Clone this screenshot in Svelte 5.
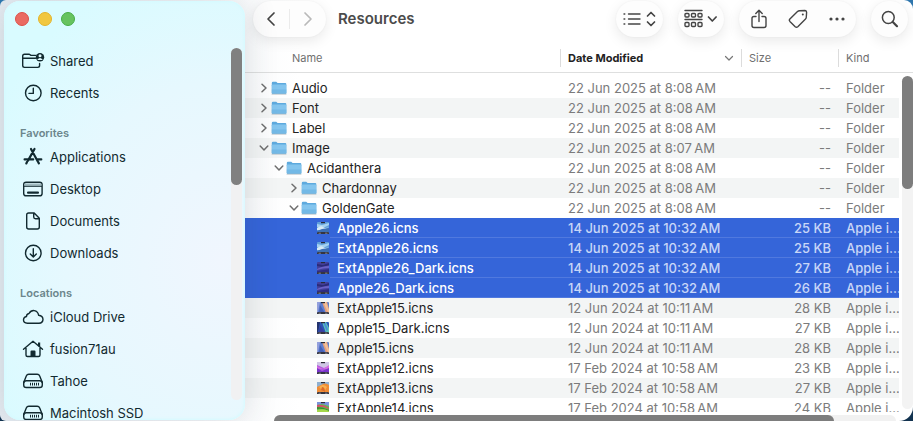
<script>
  const sidebar = [
    { title: '', items: [['Shared', 'shared'], ['Recents', 'clock']] },
    {
      title: 'Favorites',
      items: [['Applications', 'apps'], ['Desktop', 'desktop'], ['Documents', 'doc'], ['Downloads', 'down']]
    },
    {
      title: 'Locations',
      items: [['iCloud Drive', 'cloud'], ['fusion71au', 'home'], ['Tahoe', 'disk'], ['Macintosh SSD', 'disk']]
    }
  ];

  const folder = (name, level, open, date) => ({
    name, level, open, date, folder: true, size: '--', kind: 'Folder'
  });
  const file = (name, date, size, art, selected = false) => ({
    name, level: 3, date, size: size + ' KB', kind: 'Apple i…', art, selected
  });

  const j25 = '14 Jun 2025 at 10:32\u202fAM';
  const j24 = '12 Jun 2024 at 10:11\u202fAM';
  const f24 = '17 Feb 2024 at 10:58\u202fAM';
  const d8 = '22 Jun 2025 at 8:08\u202fAM';

  const rows = [
    folder('Audio', 0, false, d8),
    folder('Font', 0, false, d8),
    folder('Label', 0, false, d8),
    folder('Image', 0, true, '22 Jun 2025 at 8:07\u202fAM'),
    folder('Acidanthera', 1, true, d8),
    folder('Chardonnay', 2, false, d8),
    folder('GoldenGate', 2, true, d8),
    file('Apple26.icns', j25, 25, 'lake', true),
    file('ExtApple26.icns', j25, 25, 'lake', true),
    file('ExtApple26_Dark.icns', j25, 27, 'night', true),
    file('Apple26_Dark.icns', j25, 26, 'night', true),
    file('ExtApple15.icns', j24, 28, 'sequoia'),
    file('Apple15_Dark.icns', j24, 27, 'sequoiaDark'),
    file('Apple15.icns', j24, 28, 'sequoia'),
    file('ExtApple12.icns', f24, 23, 'monterey'),
    file('ExtApple13.icns', f24, 27, 'ventura'),
    file('ExtApple14.icns', f24, 24, 'sonoma')
  ];

  // base colour followed by the shapes laid over it
  const art = {
    lake: ['#5f9fdc', ['M0 2L5 3 12 1v2L6 6 0 5z', '#a5d2f0'], ['M0 6q4-3 6-1t6 0L7 8 0 8z', '#d5e9f5'], ['M0 9l5-2 7-1v5H0z', '#3c6fb5']],
    night: ['#43409c', ['M0 2l6 1 6-2v2L6 5 0 4z', '#2c2a78'], ['M0 7q5-3 12-3v2Q6 6 0 8z', '#6a60c4'], ['M0 9l12-2v4H0z', '#302c80']],
    sequoia: ['#5f7fd0', ['M5 0h5l2 7v4H9z', '#e8a27c'], ['M6 0h3l3 8v2h-1z', '#f3c09a'], ['M0 0h3L1 10H0z', '#93a0dc'], ['M3 3l5 8H2z', '#4560b8']],
    sequoiaDark: ['#2f55b4', ['M5 0h4l3 6v5H9z', '#5fc8b4'], ['M6 0h2l3 7-1 3z', '#4b8fd8'], ['M0 0h3L1 10H0z', '#25346e'], ['M3 3l5 8H2z', '#3a3fa0']],
    monterey: ['#b35ae0', ['M0 0h12v4L7 6 0 3z', '#cfc6e4'], ['M0 4l6 3 6-4v4H0z', '#d46be0'], ['M0 6l5 3 7-3v5H0z', '#7a35cc']],
    ventura: ['#f08c35', ['M0 0h12v3Q8 0 4 3L0 5z', '#8fb0d0'], ['M2 5q4-4 8 0l-3 5z', '#f8b050'], ['M5 5q3 0 3 5l-4-2z', '#dd6a28']],
    sonoma: ['#62bd4c', ['M0 0h12v4L5 2 0 3z', '#7a93dc'], ['M0 3q6-1 12 3v1Q5 4 0 5z', '#d8506a'], ['M0 5q6 0 12 3v1Q6 6 0 7z', '#3c8a34'], ['M0 8q7-2 12 1v2H0z', '#a5d84a']]
  };
</script>

{#snippet icon(name)}
  <svg class="icon" viewBox="0 0 24 20" width="24" height="20" aria-hidden="true">
    {#if name === 'shared'}
      <path d="M14.500 4.400H10L8.300 3.200H3.500Q1.700 3.200 1.700 5V14.600Q1.700 16.400 3.500 16.400H16.700Q18.600 16.400 18.600 14.600V12.500M2 7.200h12.500" />
      <circle cx="19" cy="6.200" r="4.200" class="solid" />
      <circle cx="19" cy="4.700" r="1.500" class="hole" />
      <path d="M16.200 8.900q2.800-3.800 5.600 0z" class="hole" />
    {:else if name === 'clock'}
      <circle cx="12.300" cy="10" r="7.800" /><path d="M12.300 5.200V10.400H8" />
    {:else if name === 'apps'}
      <path d="M10 2l6.800 12.600M13.500 2L7 13.600M3.600 12.400h8.600M15.800 12.400h4.500M6 15l-.7 1.400M17 14.800l.9 1.600" class="heavy" />
    {:else if name === 'desktop'}
      <rect x="2.700" y="3.200" width="18.400" height="13.600" rx="2.400" />
      <path d="M3.400 4.400h17v2.400h-17z" class="tint" /><path d="M3 7.300h18" class="fine" />
      <rect x="6" y="12.400" width="12" height="2.400" rx="1" class="solid" />
    {:else if name === 'doc'}
      <path d="M7.700 2h5.500L18.300 7.200V16Q18.300 18 16.300 18H7.700Q5.700 18 5.700 16V4Q5.700 2 7.700 2zM12.700 2.500V6Q12.700 7.700 14.500 7.700H18" />
    {:else if name === 'down'}
      <circle cx="12.300" cy="10" r="7.800" /><path d="M12.300 5.800v8M9.300 11l3 3 3-3" />
    {:else if name === 'cloud'}
      <path d="M6.400 16.300Q2.400 16.100 2.500 12.800 2.700 9.900 5.500 9.500 5.500 6.900 8 6.500 10 3.200 13.300 3.600 17 4.200 17.600 8.200 21.900 8.700 22 12.400 21.800 16.100 18 16.300z" />
    {:else if name === 'home'}
      <path d="M2.500 10.300L12 2.300l9.500 8M5 9v7q0 1.500 1.500 1.500h11Q19 17.500 19 16V9" />
      <path d="M9.500 17.500v-5q0-1 1-1h3q1 0 1 1v5zM17 3.500h2.200v5L17 6.700z" class="solid" />
    {:else if name === 'disk'}
      <path d="M2.700 11.500L5.300 5Q6 3.300 7.800 3.300h8.400Q18 3.300 18.700 5l2.600 6.500" />
      <rect x="2.700" y="9.800" width="18.600" height="6.700" rx="2.600" />
      <path d="M9.500 11.800v2.700M11.500 11.800v2.700M13.500 11.800v2.700M15.500 11.800v2.700M17.500 11.800v2.700" class="fine" />
    {/if}
  </svg>
{/snippet}

<div class="window">
  <aside>
    <div class="lights">
      <button class="red" aria-label="Close"></button>
      <button class="yellow" aria-label="Minimise"></button>
      <button class="green" aria-label="Zoom"></button>
    </div>
    <div class="side-body">
      <nav>
        {#each sidebar as group}
          {#if group.title}<h2>{group.title}</h2>{/if}
          {#each group.items as [label, glyph]}
            <a href="#{label}">{@render icon(glyph)}<span>{label}</span></a>
          {/each}
        {/each}
      </nav>
      <div class="side-track"><div class="side-thumb"></div></div>
    </div>
  </aside>

  <main>
    <header>
      <div class="pill history">
        <button aria-label="Back">
          <svg width="10" height="16" viewBox="0 0 10 16"><path d="M8 2L2 8l6 6" /></svg>
        </button>
        <i></i>
        <button aria-label="Forward" disabled>
          <svg width="10" height="16" viewBox="0 0 10 16"><path d="M2 2l6 6-6 6" /></svg>
        </button>
      </div>
      <h1>Resources</h1>
      <button class="pill view" aria-label="View as list">
        <svg width="34" height="18" viewBox="0 0 34 18">
          <path d="M5.500 4H17M5.500 9H17M5.500 14H17" class="line" />
          <path d="M1 4h.8M1 9h.8M1 14h.8" class="line" />
          <path d="M24.500 6L28 2.500 31.500 6M24.500 12l3.500 3.500 3.500-3.500" />
        </svg>
      </button>
      <button class="pill group" aria-label="Group items">
        <svg width="34" height="20" viewBox="0 0 34 20">
          <path d="M1 1.500h17M1 10.500h17" class="line" />
          <rect x="1" y="4.500" width="4" height="3.500" rx="1" class="line" /><rect x="7.500" y="4.500" width="4" height="3.500" rx="1" class="line" /><rect x="14" y="4.500" width="4" height="3.500" rx="1" class="line" />
          <rect x="1" y="13.500" width="4" height="4" rx="1" class="line" /><rect x="7.500" y="13.500" width="4" height="4" rx="1" class="line" /><rect x="14" y="13.500" width="4" height="4" rx="1" class="line" />
          <path d="M24.500 8l3.800 4 3.800-4" />
        </svg>
      </button>
      <div class="pill actions">
        <button aria-label="Share">
          <svg width="18" height="20" viewBox="0 0 18 20"><path d="M6 7.500H4Q2 7.500 2 9.500V16.500Q2 18.500 4 18.500H14Q16 18.500 16 16.500V9.500Q16 7.500 14 7.500H12M9 12.500V1.500M5.800 4.500L9 1.300l3.200 3.200" class="line" /></svg>
        </button>
        <button aria-label="Edit tags">
          <svg width="20" height="20" viewBox="0 0 20 20"><path d="M11.500 1.700L17 1.500Q18.600 1.600 18.600 3.200L18.300 8.300Q18.200 9.300 17.500 10L9.800 17.700Q8.500 18.900 7.200 17.700L1.900 12.400Q.8 11.200 1.900 10L9.500 2.600Q10.400 1.800 11.500 1.700z" class="line" /><circle cx="14.800" cy="5.600" r="1" class="dot" /></svg>
        </button>
        <button aria-label="More">
          <svg width="16" height="6" viewBox="0 0 16 6"><circle cx="2" cy="3" r="1.600" class="dot" /><circle cx="8" cy="3" r="1.600" class="dot" /><circle cx="14" cy="3" r="1.600" class="dot" /></svg>
        </button>
      </div>
      <button class="pill search" aria-label="Search">
        <svg width="18" height="18" viewBox="0 0 18 18"><circle cx="7.300" cy="7.500" r="5.900" class="lens" /><path d="M11.800 12l4.200 4.200" class="handle" /></svg>
      </button>
    </header>

    <div class="content">
      <div class="list">
        <table>
          <colgroup><col /><col class="c-date" /><col class="c-size" /><col class="c-kind" /></colgroup>
          <thead>
            <tr>
              <th scope="col" class="h-name">Name</th>
              <th scope="col" class="sorted"><div class="cell">Date Modified
                <svg width="10" height="7" viewBox="0 0 10 7"><path d="M1.500 1.500L5 5l3.500-3.500" /></svg></div></th>
              <th scope="col"><div class="cell">Size</div></th>
              <th scope="col"><div class="cell">Kind</div></th>
            </tr>
          </thead>
          <tbody>
            {#each rows as row}
              <tr class:selected={row.selected}>
                <td>
                  <div class="name level{row.level}">
                    {#if row.folder}
                      <button class="twist" class:open={row.open} aria-expanded={row.open} aria-label="Toggle {row.name}">
                        <svg width="8" height="10" viewBox="0 0 8 10"><path d="M2 1.200L6 5 2 8.800" /></svg>
                      </button>
                      <svg class="pic" width="16" height="14" viewBox="0 0 16 14" aria-hidden="true">
                        <path d="M.8 2Q.8.800 2 .8H5.200L6.600 2H14.200Q15.300 2 15.300 3V12Q15.300 13 14.200 13H1.900Q.8 13 .8 12z" fill="#5eaade" />
                        <path d="M.8 4.200Q.8 3.500 1.700 3.500H14.400Q15.300 3.500 15.300 4.200V12Q15.300 12.800 14.200 12.800H1.900Q.8 12.800 .8 12z" fill="#84c5ee" />
                        <path d="M.8 8.500h14.500V12q0 .8-1 .8H1.800q-1 0-1-.8z" fill="#6cb3e2" opacity=".7" />
                        <path d="M1 13.200h14" stroke="#a9b4bc" stroke-width=".7" />
                      </svg>
                    {:else}
                      <span class="twist"></span>
                      <svg class="pic" width="16" height="14" viewBox="-1 -1 16 14" aria-hidden="true">
                        <rect x="0" y="0" width="12" height="12" rx="1" fill={art[row.art][0]} />
                        {#each art[row.art].slice(1) as [d, fill]}<path {d} {fill} />{/each}
                        <path d="M0 10.800L1 10H11L12 10.800V12H0z" fill="#35353f" />
                        <path d="M4 0h4v1.200h-4z" fill="#2a2a33" />
                        <path d="M2 11.200h1.500M8.500 11.200H10" stroke="#9a9aa6" stroke-width=".8" />
                      </svg>
                    {/if}
                    <span class="label">{row.name}</span>
                  </div>
                </td>
                <td>{row.date}</td>
                <td class="size">{row.size}</td>
                <td class="kind">{row.kind}</td>
              </tr>
            {/each}
          </tbody>
        </table>
      </div>
      <div class="rail">
        <div class="rail-head"></div>
        <div class="v-track"><div class="v-thumb"></div></div>
      </div>
    </div>
    <div class="h-track"><div class="h-thumb"></div></div>
  </main>
</div>

<style>
  :global(body) {
    background: linear-gradient(#2f76ad, #12324f);
    overflow: hidden;
  }
  .window {
    display: flex;
    height: 100vh;
    overflow: hidden;
    box-sizing: border-box;
    padding: 1px 0 1px 4px;
    border-radius: 6px 9px 14px 6px;
    background: linear-gradient(90deg, #e6edf3, #fff 300px);
    font: 13px/16px Inter, "Liberation Sans", sans-serif;
    color: #232323;
  }
  button {
    padding: 0;
    border: 0;
    background: none;
  }
  svg {
    flex: none;
    fill: none;
    stroke: #444;
    stroke-width: 1.7;
    stroke-linecap: round;
    stroke-linejoin: round;
  }

  /* sidebar */
  aside {
    flex: none;
    display: flex;
    flex-direction: column;
    width: 241px;
    overflow: hidden;
    border-radius: 16px;
    background: radial-gradient(ellipse 260px 300px at 90% 62%, #f0f6fe, #e6f8fe 60%, #d9fbff);
    box-shadow: 0 0 34px rgba(40, 50, 70, 0.16), inset 0 0 3px 1px #d4faff;
    z-index: 1;
  }
  .lights {
    flex: none;
    display: flex;
    gap: 9px;
    padding: 11px 11px 19px;
  }
  .lights button {
    box-sizing: border-box;
    width: 14px;
    height: 14px;
    border: 1px solid #dd4f49;
    border-radius: 50%;
    background: #ea6a62;
  }
  .lights .yellow {
    border-color: #e3b32a;
    background: #f1c740;
  }
  .lights .green {
    border-color: #48ad45;
    background: #67c35f;
  }
  .side-body {
    flex: 1;
    min-height: 0;
    display: flex;
    padding-right: 3px;
  }
  nav {
    flex: 1;
    overflow: hidden;
  }
  nav a {
    display: flex;
    align-items: center;
    gap: 5px;
    height: 32px;
    padding-left: 17px;
    color: #122a30;
    text-decoration: none;
  }
  nav h2 {
    margin: 0;
    padding: 16px 0 0 16px;
    font-size: 11px;
    line-height: 16px;
    font-weight: 600;
    color: #6c868c;
  }
  .icon {
    stroke: #122a30;
    stroke-width: 1.4;
  }
  .icon .solid {
    fill: #122a30;
    stroke: none;
  }
  .icon .hole {
    fill: #e0faff;
    stroke: none;
  }
  .icon .tint {
    fill: #9fb9bf;
    stroke: none;
  }
  .icon .heavy {
    stroke-width: 2.2;
  }
  .icon .fine {
    stroke-width: 1;
    stroke-linecap: butt;
  }
  .side-track {
    flex: none;
    width: 11px;
    margin: 3px 0 20px;
    border-radius: 6px;
    background: #f1f1f2;
  }
  .side-thumb {
    height: 39%;
    border-radius: 6px;
    background: #808080;
  }

  /* toolbar */
  main {
    flex: 1;
    min-width: 0;
    display: flex;
    flex-direction: column;
    margin-bottom: -1px;
  }
  header {
    flex: none;
    display: flex;
    align-items: center;
    gap: 15px;
    height: 36px;
    padding: 0 5px 5px 8px;
  }
  h1 {
    flex: 1;
    margin: 0 0 0 -3px;
    font-size: 15px;
    line-height: 20px;
    font-weight: 600;
    color: #4b4b4b;
  }
  .pill {
    flex: none;
    display: flex;
    align-items: center;
    justify-content: center;
    height: 36px;
    border-radius: 18px;
    background: #fdfdfd;
    box-shadow: 0 4px 14px rgba(0, 0, 0, 0.09), 0 0 2px rgba(0, 0, 0, 0.05);
  }
  .pill button {
    flex: 1;
    display: flex;
    align-items: center;
    justify-content: center;
    height: 36px;
  }
  .history {
    width: 73px;
  }
  .history i {
    width: 1px;
    height: 20px;
    background: #ebebeb;
  }
  .history button:disabled svg {
    stroke: #b9b9b9;
  }
  .view {
    width: 47px;
  }
  .group {
    width: 46px;
  }
  .actions {
    width: 117px;
  }
  .search {
    width: 37px;
  }
  .line {
    stroke-width: 1.4;
  }
  .dot {
    fill: #444;
    stroke: none;
  }
  .lens {
    stroke-width: 1.5;
  }
  .handle {
    stroke-width: 2.2;
  }

  /* list */
  .content {
    flex: 1;
    min-height: 0;
    display: flex;
  }
  .list {
    flex: 1;
    min-width: 0;
    overflow: hidden;
  }
  table {
    width: 100%;
    table-layout: fixed;
    border-collapse: separate;
    border-spacing: 0;
  }
  .c-date {
    width: 181px;
  }
  .c-size {
    width: 97px;
  }
  .c-kind {
    width: 61px;
  }
  th {
    height: 28px;
    padding: 2px 0 0;
    border-bottom: 1px solid #dedfdf;
    font-size: 11px;
    font-weight: 400;
    text-align: left;
    color: #6f6f6f;
  }
  th.h-name {
    padding-left: 47px;
  }
  .cell {
    display: flex;
    align-items: center;
    justify-content: space-between;
    height: 18px;
    padding: 0 7px;
    border-left: 1px solid #dcdcdc;
  }
  .cell svg {
    stroke: #777;
    stroke-width: 1.2;
  }
  .sorted {
    font-weight: 700;
    color: #222;
  }
  tbody::before {
    content: "";
    display: block;
    height: 5px;
  }
  td {
    height: 20px;
    padding: 0 7px 0 8px;
    line-height: 20px;
    white-space: nowrap;
    color: #7b7b7b;
  }
  td:first-child {
    padding: 0;
    color: #232323;
  }
  .size {
    text-align: right;
  }
  td.kind {
    padding-right: 0;
  }
  tbody tr:nth-child(even) td {
    background: #f3f5f5;
  }
  tbody tr.selected td {
    background: linear-gradient(#5079df, #5079df) 0 100% / 100% 1px no-repeat #3565d9;
    color: #c9d7f7;
    font-weight: 500;
  }
  tbody tr.selected td:first-child {
    color: #fff;
    background-position: 85px 100%;
  }
  .name {
    display: flex;
    align-items: center;
    height: 20px;
  }
  .level0 {
    padding-left: 12px;
  }
  .level1 {
    padding-left: 27px;
  }
  .level2 {
    padding-left: 42px;
  }
  .level3 {
    padding-left: 57px;
  }
  .twist {
    display: flex;
    align-items: center;
    justify-content: center;
    width: 14px;
    height: 14px;
  }
  .twist svg {
    stroke: #6f6f6f;
    stroke-width: 1.5;
  }
  .twist.open svg {
    transform: rotate(90deg);
  }
  .pic {
    stroke: none;
    margin-right: 5px;
  }

  /* scroll bars */
  .rail {
    flex: none;
    display: flex;
    flex-direction: column;
    width: 14px;
  }
  .rail-head {
    height: 30px;
    border-bottom: 1px solid #dedfdf;
  }
  .v-track {
    flex: 1;
    width: 11px;
    margin: 3px 0 3px 3px;
    border-radius: 6px;
    background: #f3f3f3;
  }
  .v-thumb {
    height: 34%;
    border-radius: 6px;
    background: #7d7d7d;
  }
  .h-track {
    flex: none;
    height: 6px;
    margin: 3px 17px 0 29px;
    border-radius: 6px 6px 0 0;
    background: #f1f1f1;
  }
  .h-thumb {
    width: 90%;
    height: 100%;
    border-radius: 6px 6px 0 0;
    background: #7d7d7d;
  }
</style>
